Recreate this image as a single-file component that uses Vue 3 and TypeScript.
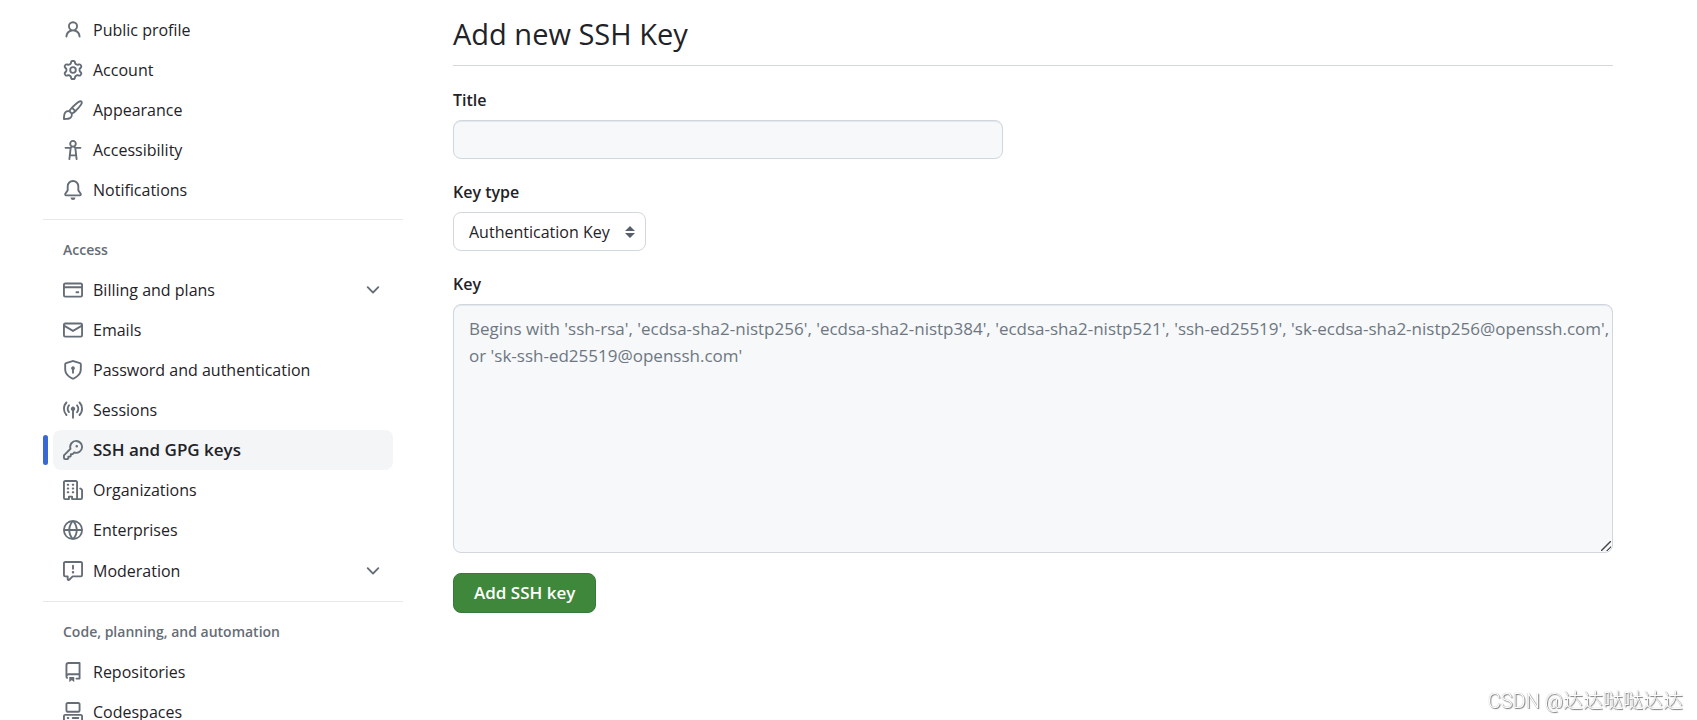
<script setup lang="ts">
import { ref } from 'vue'

interface NavItem {
  label: string
  icon: string
  expandable?: boolean
  current?: boolean
  tall?: boolean
}

interface NavGroup {
  heading?: string
  items: NavItem[]
}

const icons: Record<string, string> = {
  person:
    'M10.561 8.073a6.005 6.005 0 0 1 3.432 5.142.75.75 0 1 1-1.498.07 4.5 4.5 0 0 0-8.99 0 .75.75 0 0 1-1.498-.07 6.004 6.004 0 0 1 3.431-5.142 3.999 3.999 0 1 1 5.123 0ZM10.5 5a2.5 2.5 0 1 0-5 0 2.5 2.5 0 0 0 5 0Z',
  gear:
    'M8 0a8.2 8.2 0 0 1 .701.031C9.444.095 9.99.645 10.16 1.29l.288 1.107c.018.066.079.158.212.224.231.114.454.243.668.386.123.082.233.09.299.071l1.103-.303c.644-.176 1.392.021 1.82.63.27.385.506.792.704 1.218.315.675.111 1.422-.364 1.891l-.814.806c-.049.048-.098.147-.088.294.016.257.016.515 0 .772-.01.147.038.246.088.294l.814.806c.475.469.679 1.216.364 1.891a7.977 7.977 0 0 1-.704 1.217c-.428.61-1.176.807-1.82.63l-1.102-.302c-.067-.019-.177-.011-.3.071a5.909 5.909 0 0 1-.668.386c-.133.066-.194.158-.211.224l-.29 1.106c-.168.646-.715 1.196-1.458 1.26a8.006 8.006 0 0 1-1.402 0c-.743-.064-1.289-.614-1.458-1.26l-.289-1.106c-.018-.066-.079-.158-.212-.224a5.738 5.738 0 0 1-.668-.386c-.123-.082-.233-.09-.299-.071l-1.103.303c-.644.176-1.392-.021-1.82-.63a8.12 8.12 0 0 1-.704-1.218c-.315-.675-.111-1.422.363-1.891l.815-.806c.05-.048.098-.147.088-.294a6.214 6.214 0 0 1 0-.772c.01-.147-.038-.246-.088-.294l-.815-.806C.635 6.045.431 5.298.746 4.623a7.92 7.92 0 0 1 .704-1.217c.428-.61 1.176-.807 1.82-.63l1.102.302c.067.019.177.011.3-.071.214-.143.437-.272.668-.386.133-.066.194-.158.211-.224l.29-1.106C6.009.645 6.556.095 7.299.03 7.53.01 7.764 0 8 0Zm-.571 1.525c-.036.003-.108.036-.137.146l-.289 1.105c-.147.561-.549.967-.998 1.189-.173.086-.34.183-.5.29-.417.278-.97.423-1.529.27l-1.103-.303c-.109-.03-.175.016-.195.045-.22.312-.412.644-.573.99-.014.031-.021.11.059.19l.815.806c.411.406.562.957.53 1.456a4.709 4.709 0 0 0 0 .582c.032.499-.119 1.05-.53 1.456l-.815.806c-.081.08-.073.159-.059.19.162.346.353.677.573.989.02.03.085.076.195.046l1.102-.303c.56-.153 1.113-.008 1.53.27.161.107.328.204.501.29.447.222.85.629.997 1.189l.289 1.105c.029.109.101.143.137.146a6.6 6.6 0 0 0 1.142 0c.036-.003.108-.036.137-.146l.289-1.105c.147-.561.549-.967.998-1.189.173-.086.34-.183.5-.29.417-.278.97-.423 1.529-.27l1.103.303c.109.029.175-.016.195-.045.22-.313.411-.644.573-.99.014-.031.021-.11-.059-.19l-.815-.806c-.411-.406-.562-.957-.53-1.456a4.709 4.709 0 0 0 0-.582c-.032-.499.119-1.05.53-1.456l.815-.806c.081-.08.073-.159.059-.19a6.464 6.464 0 0 0-.573-.989c-.02-.03-.085-.076-.195-.046l-1.102.303c-.56.153-1.113.008-1.53-.27a4.44 4.44 0 0 0-.501-.29c-.447-.222-.85-.629-.997-1.189l-.289-1.105c-.029-.11-.101-.143-.137-.146a6.6 6.6 0 0 0-1.142 0ZM11 8a3 3 0 1 1-6 0 3 3 0 0 1 6 0ZM9.5 8a1.5 1.5 0 1 0-3.001.001A1.5 1.5 0 0 0 9.5 8Z',
  brush:
    'M11.134 1.535c.7-.509 1.416-.942 2.076-1.155.649-.21 1.463-.267 2.069.34.603.601.568 1.411.368 2.07-.202.668-.624 1.39-1.125 2.096-1.011 1.424-2.496 2.987-3.775 4.249-1.098 1.084-2.132 1.839-3.04 2.3a3.744 3.744 0 0 1-1.055 3.217c-.431.431-1.065.691-1.657.861-.614.177-1.294.287-1.914.357A21.151 21.151 0 0 1 .797 16H.743l.007-.75H.749L.742 16a.75.75 0 0 1-.743-.742l.743-.008-.742.007v-.054a21.25 21.25 0 0 1 .13-2.284c.067-.647.187-1.287.358-1.914.17-.591.43-1.226.86-1.657a3.746 3.746 0 0 1 3.227-1.054c.466-.893 1.225-1.907 2.314-2.982 1.271-1.255 2.833-2.75 4.245-3.777ZM1.62 13.089c-.051.464-.086.929-.104 1.395.466-.018.932-.053 1.396-.104a10.511 10.511 0 0 0 1.668-.309c.526-.151.856-.325 1.011-.48a2.25 2.25 0 1 0-3.182-3.182c-.155.155-.329.485-.48 1.01a10.515 10.515 0 0 0-.309 1.67Zm10.396-10.34c-1.224.89-2.605 2.189-3.822 3.384l1.718 1.718c1.21-1.205 2.51-2.597 3.387-3.833.47-.662.78-1.227.912-1.662.134-.444.032-.551.009-.575h-.001V1.78c-.014-.014-.113-.113-.548.027-.432.14-.995.462-1.655.942Zm-4.832 7.266-.001.001a9.859 9.859 0 0 0 1.63-1.142L7.155 7.216a9.7 9.7 0 0 0-1.161 1.607c.482.302.889.71 1.19 1.192Z',
  accessibility:
    'M9.923 5.302c.063.063.122.129.178.198H14A.75.75 0 0 1 14 7h-3.3l.578 5.163.362 2.997a.75.75 0 0 1-1.49.18L9.868 13H6.132l-.282 2.34a.75.75 0 0 1-1.49-.18l.362-2.997L5.3 7H2a.75.75 0 0 1 0-1.5h3.9a2.54 2.54 0 0 1 .176-.198 3 3 0 1 1 3.847 0ZM9.2 7.073h-.001a1.206 1.206 0 0 0-2.398 0L6.305 11.5h3.39ZM9.5 3a1.5 1.5 0 1 0-3.001.001A1.5 1.5 0 0 0 9.5 3Z',
  bell:
    'M8 16a2 2 0 0 0 1.985-1.75c.017-.137-.097-.25-.235-.25h-3.5c-.138 0-.252.113-.235.25A2 2 0 0 0 8 16ZM3 5a5 5 0 0 1 10 0v2.947c0 .05.015.098.042.139l1.703 2.555A1.519 1.519 0 0 1 13.482 13H2.518a1.516 1.516 0 0 1-1.263-2.36l1.703-2.554A.255.255 0 0 0 3 7.947Zm5-3.5A3.5 3.5 0 0 0 4.5 5v2.947c0 .346-.102.683-.294.97l-1.703 2.556a.017.017 0 0 0-.003.01l.001.006c0 .002.002.004.004.006l.006.004.007.001h10.964l.007-.001.006-.004.004-.006.001-.007a.017.017 0 0 0-.003-.01l-1.703-2.554a1.745 1.745 0 0 1-.294-.97V5A3.5 3.5 0 0 0 8 1.5Z',
  card:
    'M10.75 9a.75.75 0 0 0 0 1.5h1.5a.75.75 0 0 0 0-1.5h-1.5ZM0 3.75C0 2.784.784 2 1.75 2h12.5c.966 0 1.75.784 1.75 1.75v8.5A1.75 1.75 0 0 1 14.25 14H1.75A1.75 1.75 0 0 1 0 12.25ZM14.5 6.5h-13v5.75c0 .138.112.25.25.25h12.5a.25.25 0 0 0 .25-.25Zm0-2.75a.25.25 0 0 0-.25-.25H1.75a.25.25 0 0 0-.25.25V5h13Z',
  mail:
    'M1.75 2h12.5c.966 0 1.75.784 1.75 1.75v8.5A1.75 1.75 0 0 1 14.25 14H1.75A1.75 1.75 0 0 1 0 12.25v-8.5C0 2.784.784 2 1.75 2ZM1.5 12.251c0 .138.112.25.25.25h12.5a.25.25 0 0 0 .25-.25V5.809L8.38 9.397a.75.75 0 0 1-.76 0L1.5 5.809v6.442Zm13-8.181v-.32a.25.25 0 0 0-.25-.25H1.75a.25.25 0 0 0-.25.25v.32L8 7.88Z',
  shield:
    'm8.533.133 5.25 1.68A1.75 1.75 0 0 1 15 3.48V7c0 1.566-.32 3.182-1.303 4.682-.983 1.498-2.585 2.813-5.032 3.855a1.697 1.697 0 0 1-1.33 0c-2.447-1.042-4.049-2.357-5.032-3.855C1.32 10.182 1 8.566 1 7V3.48a1.75 1.75 0 0 1 1.217-1.667l5.25-1.68a1.748 1.748 0 0 1 1.066 0Zm-.61 1.429.001.001-5.25 1.68a.251.251 0 0 0-.174.237V7c0 1.36.275 2.666 1.057 3.859.784 1.194 2.121 2.342 4.366 3.298a.196.196 0 0 0 .154 0c2.245-.957 3.582-2.103 4.366-3.297C13.225 9.666 13.5 8.358 13.5 7V3.48a.25.25 0 0 0-.174-.238l-5.25-1.68a.25.25 0 0 0-.153 0ZM9.5 6.5c0 .536-.286 1.032-.75 1.3v2.45a.75.75 0 0 1-1.5 0V7.8A1.5 1.5 0 1 1 9.5 6.5Z',
  broadcast:
    'M8.75 8.582v5.668a.75.75 0 0 1-1.5 0V8.582a1.75 1.75 0 1 1 1.5 0Zm3.983-7.125a.75.75 0 0 1 1.06.026A7.976 7.976 0 0 1 16 7c0 2.139-.84 4.083-2.207 5.517a.75.75 0 1 1-1.086-1.034A6.474 6.474 0 0 0 14.5 7a6.474 6.474 0 0 0-1.793-4.483.75.75 0 0 1 .026-1.06Zm-9.466 0c.3.286.312.76.026 1.06A6.474 6.474 0 0 0 1.5 7a6.47 6.47 0 0 0 1.793 4.483.75.75 0 0 1-1.086 1.034A7.973 7.973 0 0 1 0 7c0-2.139.84-4.083 2.207-5.517a.75.75 0 0 1 1.06-.026Zm8.556 2.321A4.988 4.988 0 0 1 13 7a4.988 4.988 0 0 1-1.177 3.222.75.75 0 1 1-1.146-.967A3.487 3.487 0 0 0 11.5 7c0-.86-.309-1.645-.823-2.255a.75.75 0 0 1 1.146-.967Zm-6.492.958A3.48 3.48 0 0 0 4.5 7a3.48 3.48 0 0 0 .823 2.255.75.75 0 0 1-1.146.967A4.981 4.981 0 0 1 3 7a4.982 4.982 0 0 1 1.188-3.236.75.75 0 1 1 1.143.972Z',
  key:
    'M10.5 0a5.499 5.499 0 1 1-1.288 10.848l-.932.932a.749.749 0 0 1-.53.22H7v.75a.749.749 0 0 1-.22.53l-.5.5a.749.749 0 0 1-.53.22H5v.75a.749.749 0 0 1-.22.53l-.5.5a.749.749 0 0 1-.53.22h-2A1.75 1.75 0 0 1 0 14.25v-2c0-.199.079-.389.22-.53l4.932-4.932A5.5 5.5 0 0 1 10.5 0Zm-4 5.5c-.001.431.069.86.205 1.269a.75.75 0 0 1-.181.768L1.5 12.56v1.69c0 .138.112.25.25.25h1.69l.06-.06v-1.19a.75.75 0 0 1 .75-.75h1.19l.06-.06v-1.19a.75.75 0 0 1 .75-.75h1.19l1.023-1.025a.75.75 0 0 1 .768-.18A4 4 0 1 0 6.5 5.5ZM11 6a1 1 0 1 1 0-2 1 1 0 0 1 0 2Z',
  organization:
    'M1.75 16A1.75 1.75 0 0 1 0 14.25V1.75C0 .784.784 0 1.75 0h8.5C11.216 0 12 .784 12 1.75v12.5c0 .085-.006.168-.018.25h2.268a.25.25 0 0 0 .25-.25V8.285a.25.25 0 0 0-.111-.208l-1.055-.703a.749.749 0 1 1 .832-1.248l1.055.703c.487.325.779.871.779 1.456v5.965A1.75 1.75 0 0 1 14.25 16h-3.5a.766.766 0 0 1-.197-.026c-.099.017-.2.026-.303.026h-3a.75.75 0 0 1-.75-.75V14h-1v1.25a.75.75 0 0 1-.75.75Zm-.25-1.75c0 .138.112.25.25.25H4v-1.25a.75.75 0 0 1 .75-.75h2.5a.75.75 0 0 1 .75.75v1.25h2.25a.25.25 0 0 0 .25-.25V1.75a.25.25 0 0 0-.25-.25h-8.5a.25.25 0 0 0-.25.25ZM3.75 6h.5a.75.75 0 0 1 0 1.5h-.5a.75.75 0 0 1 0-1.5ZM3 3.75A.75.75 0 0 1 3.75 3h.5a.75.75 0 0 1 0 1.5h-.5A.75.75 0 0 1 3 3.75Zm4 3A.75.75 0 0 1 7.75 6h.5a.75.75 0 0 1 0 1.5h-.5A.75.75 0 0 1 7 6.75ZM7.75 3h.5a.75.75 0 0 1 0 1.5h-.5a.75.75 0 0 1 0-1.5ZM3 9.75A.75.75 0 0 1 3.75 9h.5a.75.75 0 0 1 0 1.5h-.5A.75.75 0 0 1 3 9.75ZM7.75 9h.5a.75.75 0 0 1 0 1.5h-.5a.75.75 0 0 1 0-1.5Z',
  globe:
    'M8 0a8 8 0 1 1 0 16A8 8 0 0 1 8 0ZM5.78 8.75a9.64 9.64 0 0 0 1.363 4.177c.255.426.542.832.857 1.215.245-.296.551-.705.857-1.215A9.64 9.64 0 0 0 10.22 8.75Zm4.44-1.5a9.64 9.64 0 0 0-1.363-4.177c-.307-.51-.612-.919-.857-1.215a9.927 9.927 0 0 0-.857 1.215A9.64 9.64 0 0 0 5.78 7.25Zm-5.944 1.5H1.543a6.507 6.507 0 0 0 4.666 5.5c-.123-.181-.24-.365-.352-.552-.715-1.192-1.437-2.874-1.581-4.948Zm-2.733-1.5h2.733c.144-2.074.866-3.756 1.58-4.948.12-.197.237-.381.353-.552a6.507 6.507 0 0 0-4.666 5.5Zm10.181 1.5c-.144 2.074-.866 3.756-1.58 4.948-.12.197-.237.381-.353.552a6.507 6.507 0 0 0 4.666-5.5Zm2.733-1.5a6.507 6.507 0 0 0-4.666-5.5c.123.181.24.365.353.552.714 1.192 1.436 2.874 1.58 4.948Z',
  report:
    'M0 1.75C0 .784.784 0 1.75 0h12.5C15.216 0 16 .784 16 1.75v9.5A1.75 1.75 0 0 1 14.25 13H8.06l-2.573 2.573A1.458 1.458 0 0 1 3 14.543V13H1.75A1.75 1.75 0 0 1 0 11.25Zm1.75-.25a.25.25 0 0 0-.25.25v9.5c0 .138.112.25.25.25h2a.75.75 0 0 1 .75.75v2.19l2.72-2.72a.749.749 0 0 1 .53-.22h6.5a.25.25 0 0 0 .25-.25v-9.5a.25.25 0 0 0-.25-.25Zm7 2.25v2.5a.75.75 0 0 1-1.5 0v-2.5a.75.75 0 0 1 1.5 0ZM9 9a1 1 0 1 1-2 0 1 1 0 0 1 2 0Z',
  repo:
    'M2 2.5A2.5 2.5 0 0 1 4.5 0h8.75a.75.75 0 0 1 .75.75v12.5a.75.75 0 0 1-.75.75h-2.5a.75.75 0 0 1 0-1.5h1.75v-2h-8a1 1 0 0 0-.714 1.7.75.75 0 1 1-1.072 1.05A2.495 2.495 0 0 1 2 11.5Zm10.5-1h-8a1 1 0 0 0-1 1v6.708A2.486 2.486 0 0 1 4.5 9h8ZM5 12.25a.25.25 0 0 1 .25-.25h3.5a.25.25 0 0 1 .25.25v3.25a.25.25 0 0 1-.4.2l-1.45-1.087a.249.249 0 0 0-.3 0L5.4 15.7a.25.25 0 0 1-.4-.2Z',
  codespaces:
    'M0 11.25c0-.966.784-1.75 1.75-1.75h12.5c.966 0 1.75.784 1.75 1.75v3A1.75 1.75 0 0 1 14.25 16H1.75A1.75 1.75 0 0 1 0 14.25Zm2-9.5C2 .784 2.784 0 3.75 0h8.5C13.216 0 14 .784 14 1.75v5a1.75 1.75 0 0 1-1.75 1.75h-8.5A1.75 1.75 0 0 1 2 6.75Zm1.75-.25a.25.25 0 0 0-.25.25v5c0 .138.112.25.25.25h8.5a.25.25 0 0 0 .25-.25v-5a.25.25 0 0 0-.25-.25Zm-2 9.5a.25.25 0 0 0-.25.25v3c0 .138.112.25.25.25h12.5a.25.25 0 0 0 .25-.25v-3a.25.25 0 0 0-.25-.25ZM7 12.75a.75.75 0 0 1 .75-.75h4.5a.75.75 0 0 1 0 1.5h-4.5a.75.75 0 0 1-.75-.75Zm-4 0a.75.75 0 0 1 .75-.75h.5a.75.75 0 0 1 0 1.5h-.5a.75.75 0 0 1-.75-.75Z',
  chevron:
    'M12.78 5.22a.749.749 0 0 1 0 1.06l-4.25 4.25a.749.749 0 0 1-1.06 0L3.22 6.28a.749.749 0 1 1 1.06-1.06L8 8.939l3.72-3.719a.749.749 0 0 1 1.06 0Z',
}

const groups: NavGroup[] = [
  {
    items: [
      { label: 'Public profile', icon: 'person' },
      { label: 'Account', icon: 'gear' },
      { label: 'Appearance', icon: 'brush' },
      { label: 'Accessibility', icon: 'accessibility' },
      { label: 'Notifications', icon: 'bell' },
    ],
  },
  {
    heading: 'Access',
    items: [
      { label: 'Billing and plans', icon: 'card', expandable: true },
      { label: 'Emails', icon: 'mail' },
      { label: 'Password and authentication', icon: 'shield' },
      { label: 'Sessions', icon: 'broadcast' },
      { label: 'SSH and GPG keys', icon: 'key', current: true },
      { label: 'Organizations', icon: 'organization' },
      { label: 'Enterprises', icon: 'globe' },
      { label: 'Moderation', icon: 'report', expandable: true, tall: true },
    ],
  },
  {
    heading: 'Code, planning, and automation',
    items: [
      { label: 'Repositories', icon: 'repo' },
      { label: 'Codespaces', icon: 'codespaces' },
    ],
  },
]

const title = ref('')
const keyType = ref('authentication')
const keyText = ref('')
const placeholder =
  "Begins with 'ssh-rsa', 'ecdsa-sha2-nistp256', 'ecdsa-sha2-nistp384', 'ecdsa-sha2-nistp521', 'ssh-ed25519', 'sk-ecdsa-sha2-nistp256@openssh.com', or 'sk-ssh-ed25519@openssh.com'"
</script>

<template>
  <div class="page">
    <nav class="sidebar" aria-label="Settings">
      <section v-for="(group, g) in groups" :key="g" class="group">
        <h2 v-if="group.heading" class="group-heading">{{ group.heading }}</h2>
        <ul class="list">
          <li v-for="item in group.items" :key="item.label" class="row" :class="{ current: item.current }">
            <component
              :is="item.expandable ? 'button' : 'a'"
              class="item"
              :class="{ tall: item.tall }"
              :href="item.expandable ? undefined : '#'"
              :type="item.expandable ? 'button' : undefined"
              :aria-expanded="item.expandable ? 'false' : undefined"
              :aria-current="item.current ? 'page' : undefined"
            >
              <svg class="icon" viewBox="0 0 16 16" aria-hidden="true"><path :d="icons[item.icon]" /></svg>
              <span class="label">{{ item.label }}</span>
              <svg v-if="item.expandable" class="icon" viewBox="0 0 16 16" aria-hidden="true">
                <path :d="icons.chevron" />
              </svg>
            </component>
          </li>
        </ul>
      </section>
    </nav>

    <main class="content">
      <h1 class="heading">Add new SSH Key</h1>
      <form class="form" @submit.prevent>
        <div class="field">
          <label for="key-title">Title</label>
          <input id="key-title" v-model="title" class="control text" type="text" />
        </div>
        <div class="field">
          <label for="key-type">Key type</label>
          <div class="select-wrap">
            <select id="key-type" v-model="keyType" class="control select">
              <option value="authentication">Authentication Key</option>
              <option value="signing">Signing Key</option>
            </select>
            <svg class="arrows" viewBox="0 0 10 12" aria-hidden="true">
              <path d="M5 0 10 5H0ZM0 7h10l-5 5Z" />
            </svg>
          </div>
        </div>
        <div class="field">
          <label for="key-body">Key</label>
          <textarea id="key-body" v-model="keyText" class="control area" :placeholder="placeholder"></textarea>
        </div>
        <button class="submit" type="submit">Add SSH key</button>
      </form>
    </main>

    <div class="watermark">CSDN @达达哒哒达达</div>
  </div>
</template>

<style>
body {
  margin: 0;
  background: #fff;
}
</style>

<style scoped>
.page {
  box-sizing: border-box;
  display: grid;
  grid-template-columns: 360px minmax(0, 1fr);
  gap: 50px;
  height: 100vh;
  overflow-y: auto;
  scrollbar-width: none;
  padding: 10px 84px 0 43px;
  color: #1f2328;
  font: 16px/26px "Open Sans", "Noto Sans", sans-serif;
}

.page *,
.page *::before {
  box-sizing: border-box;
}

.group + .group {
  margin-top: 9px;
  border-top: 1px solid #e6e8eb;
}

.group-heading {
  margin: 0;
  padding: 20px 20px 10px;
  color: #656d76;
  font-size: 14px;
  font-weight: 600;
  line-height: 20px;
}

.list {
  margin: 0;
  padding: 0;
  list-style: none;
}

.row {
  position: relative;
  padding: 0 10px;
}

.item {
  display: flex;
  align-items: center;
  gap: 10px;
  width: 100%;
  height: 40px;
  padding: 0 10px;
  border: 0;
  border-radius: 8px;
  background: none;
  color: inherit;
  font: inherit;
  text-align: left;
  text-decoration: none;
}

.item.tall {
  height: 42px;
}

.label {
  flex: 1;
}

.icon {
  flex: none;
  width: 20px;
  height: 20px;
  fill: #656d76;
}

.current .item {
  background: #f3f5f7;
  font-size: 17px;
  font-weight: 600;
}

.current::before {
  position: absolute;
  top: 5px;
  left: 0;
  width: 5px;
  height: 30px;
  border-radius: 3px;
  background: #3869d4;
  content: "";
}

.heading {
  margin: 0;
  padding-bottom: 8px;
  border-bottom: 1px solid #d5d9de;
  font-size: 29px;
  font-weight: 400;
  line-height: 47px;
}

.form {
  display: flex;
  flex-direction: column;
  align-items: flex-start;
  gap: 20px;
  padding-top: 21px;
}

.field {
  display: flex;
  flex-direction: column;
  align-items: flex-start;
  gap: 7px;
  width: 100%;
}

.field label {
  font-weight: 600;
}

.control {
  border: 1px solid #d0d7de;
  border-radius: 8px;
  background: #f6f8fa;
  color: inherit;
  font: inherit;
}

.text {
  width: 100%;
  max-width: 550px;
  height: 39px;
  padding: 0 15px;
  box-shadow: inset 0 1px 0 #e4e8ec;
}

.select-wrap {
  position: relative;
}

.select {
  display: block;
  width: 193px;
  height: 39px;
  padding: 0 28px 0 15px;
  appearance: none;
  background: #fff;
}

.arrows {
  position: absolute;
  top: 14px;
  right: 11px;
  width: 10px;
  height: 12px;
  fill: #57606a;
  pointer-events: none;
}

.area {
  display: block;
  width: 100%;
  height: 249px;
  padding: 10px 0 10px 15px;
  box-shadow: inset 0 1px 0 #e4e8ec;
  font-size: 17px;
  line-height: 27px;
  resize: vertical;
}

.area::placeholder {
  color: #6e7781;
  opacity: 1;
}

.area::-webkit-resizer {
  background: linear-gradient(
      135deg,
      transparent 44%,
      #444 46%,
      #444 54%,
      transparent 56%,
      transparent 74%,
      #444 76%,
      #444 83%,
      transparent 85%
    )
    4px 4px / 10px 10px no-repeat;
}

.submit {
  height: 40px;
  padding: 0 20px;
  border: 1px solid #37793a;
  border-radius: 8px;
  background: #3f883b;
  color: #fff;
  font: inherit;
  font-size: 17px;
  font-weight: 600;
}

.watermark {
  position: fixed;
  right: 14px;
  bottom: 5px;
  color: #fff;
  font: 300 20px/28px Roboto, "Noto Sans CJK SC", sans-serif;
  text-shadow: 1px 1px 1px #777, 0 0 1px #999;
}
</style>
